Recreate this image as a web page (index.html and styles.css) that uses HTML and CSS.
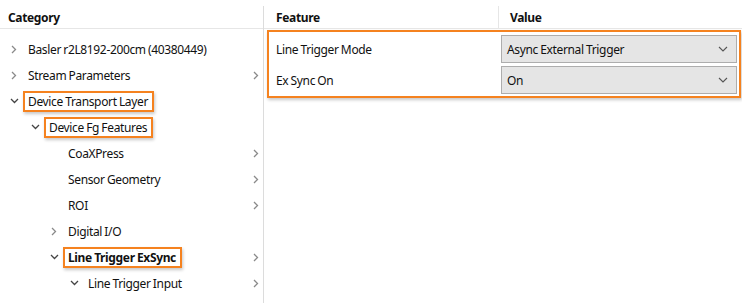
FILE: index.html
```html
<!DOCTYPE html>
<html>

<head>
  <title>feature browser</title>
  <link rel="stylesheet" href="styles.css">
</head>

<body>
  <div class="browser">
    <div class="pane category-pane">
      <div class="pane-header">Category</div>
      <ul class="tree">
        <li class="node lvl0">
          <span class="twist"><svg width="6" height="9" viewBox="0 0 6 9"><path d="M1 1l3.5 3.5L1 8" /></svg></span>
          <span class="label">Basler r2L8192-200cm (40380449)</span>
        </li>
        <li class="node lvl0">
          <span class="twist"><svg width="6" height="9" viewBox="0 0 6 9"><path d="M1 1l3.5 3.5L1 8" /></svg></span>
          <span class="label">Stream Parameters</span>
          <span class="more"><svg width="6" height="9" viewBox="0 0 6 9"><path d="M1 1l3.5 3.5L1 8" /></svg></span>
        </li>
        <li class="node lvl0 open">
          <span class="twist"><svg width="9" height="6" viewBox="0 0 9 6"><path d="M1 1l3.5 3.5L8 1" /></svg></span>
          <span class="label hl">Device Transport Layer</span>
        </li>
        <li class="node lvl1 open">
          <span class="twist"><svg width="9" height="6" viewBox="0 0 9 6"><path d="M1 1l3.5 3.5L8 1" /></svg></span>
          <span class="label hl">Device Fg Features</span>
        </li>
        <li class="node lvl2">
          <span class="twist"></span>
          <span class="label">CoaXPress</span>
          <span class="more"><svg width="6" height="9" viewBox="0 0 6 9"><path d="M1 1l3.5 3.5L1 8" /></svg></span>
        </li>
        <li class="node lvl2">
          <span class="twist"></span>
          <span class="label">Sensor Geometry</span>
          <span class="more"><svg width="6" height="9" viewBox="0 0 6 9"><path d="M1 1l3.5 3.5L1 8" /></svg></span>
        </li>
        <li class="node lvl2">
          <span class="twist"></span>
          <span class="label">ROI</span>
          <span class="more"><svg width="6" height="9" viewBox="0 0 6 9"><path d="M1 1l3.5 3.5L1 8" /></svg></span>
        </li>
        <li class="node lvl2">
          <span class="twist"><svg width="6" height="9" viewBox="0 0 6 9"><path d="M1 1l3.5 3.5L1 8" /></svg></span>
          <span class="label">Digital I/O</span>
        </li>
        <li class="node lvl2 open">
          <span class="twist"><svg width="9" height="6" viewBox="0 0 9 6"><path d="M1 1l3.5 3.5L8 1" /></svg></span>
          <span class="label hl bold">Line Trigger ExSync</span>
          <span class="more"><svg width="6" height="9" viewBox="0 0 6 9"><path d="M1 1l3.5 3.5L1 8" /></svg></span>
        </li>
        <li class="node lvl3 open">
          <span class="twist"><svg width="9" height="6" viewBox="0 0 9 6"><path d="M1 1l3.5 3.5L8 1" /></svg></span>
          <span class="label">Line Trigger Input</span>
          <span class="more"><svg width="6" height="9" viewBox="0 0 6 9"><path d="M1 1l3.5 3.5L1 8" /></svg></span>
        </li>
      </ul>
    </div>

    <div class="pane feature-pane">
      <div class="pane-header cols">
        <div class="col-feature">Feature</div>
        <div class="col-value">Value</div>
      </div>
      <div class="feature-list">
        <div class="feature-row">
          <div class="feature-name">Line Trigger Mode</div>
          <div class="select">
            <span>Async External Trigger</span>
            <svg width="10" height="6" viewBox="0 0 10 6"><path d="M1 1l4 4 4-4" /></svg>
          </div>
        </div>
        <div class="feature-row">
          <div class="feature-name">Ex Sync On</div>
          <div class="select">
            <span>On</span>
            <svg width="10" height="6" viewBox="0 0 10 6"><path d="M1 1l4 4 4-4" /></svg>
          </div>
        </div>
      </div>
    </div>
  </div>
</body>

</html>
```

FILE: styles.css
```css
/* reset */
* {
  margin: 0;
  padding: 0;
  box-sizing: border-box;
}

ul,
li {
  list-style: none;
}

body {
  background: #fff;
  font-family: "Noto Sans", "Open Sans", sans-serif;
  font-size: 12px;
  letter-spacing: -0.35px;
  word-spacing: -0.5px;
  color: #111;
}

.browser {
  display: flex;
  height: 303px;
  padding-top: 6px;
}

.pane-header {
  height: 23px;
  border-bottom: 1px solid #e6e6e6;
  font-weight: bold;
  line-height: 24px;
  padding-left: 8px;
}

/* left: category tree */
.category-pane {
  width: 264px;
  border-right: 1px solid #dcdcdc;
}

.tree {
  padding-top: 7px;
}

.node {
  display: flex;
  align-items: center;
  height: 26px;
  padding-left: 8px;
}

.node.lvl1 { padding-left: 29px; }
.node.lvl2 { padding-left: 48px; }
.node.lvl3 { padding-left: 68px; }

.twist {
  width: 12px;
  margin-right: 8px;
  display: flex;
  justify-content: center;
  align-items: center;
}

.twist svg path,
.more svg path {
  fill: none;
  stroke: #8a8a8a;
  stroke-width: 1.3;
}

.open .twist svg path {
  stroke: #444;
}

.label {
  white-space: nowrap;
  line-height: 17px;
}

.label.hl {
  margin-left: -5px;
  padding: 0 4px 0 3px;
  border: 2px solid #f5821f;
  box-shadow: 1px 2px 3px rgba(0, 0, 0, 0.22);
}

.label.bold {
  font-weight: bold;
}

.more {
  margin-left: auto;
  margin-right: 4px;
  display: flex;
  align-items: center;
}

/* right: features */
.feature-pane {
  flex: 1;
}

.pane-header.cols {
  display: flex;
  padding-left: 0;
}

.col-feature {
  width: 235px;
  padding-left: 12px;
  border-right: 1px solid #e6e6e6;
}

.col-value {
  padding-left: 11px;
}

.feature-list {
  margin: 1px 1px 0 3px;
  border: 2px solid #f5821f;
  box-shadow: 1px 2px 3px rgba(0, 0, 0, 0.22);
  padding: 3px 2px 2px 0;
  display: flex;
  flex-direction: column;
  gap: 3px;
}

.feature-row {
  display: flex;
  align-items: center;
  height: 28px;
}

.feature-name {
  width: 232px;
  padding-left: 7px;
}

.select {
  flex: 1;
  height: 100%;
  background: #e5e5e5;
  border: 1px solid #adadad;
  display: flex;
  align-items: center;
  justify-content: space-between;
  padding: 0 8px 0 5px;
}

.select svg path {
  fill: none;
  stroke: #555;
  stroke-width: 1.1;
}
```
